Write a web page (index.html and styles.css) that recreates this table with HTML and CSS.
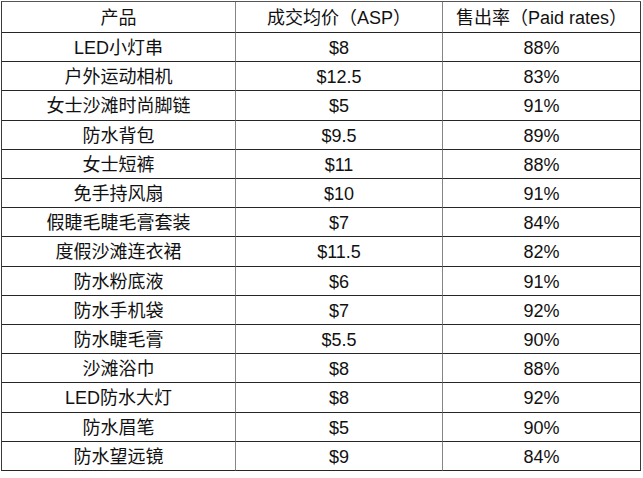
FILE: index.html
```html
<!DOCTYPE html>
<html lang="zh">
<head>
<meta charset="utf-8">
<link rel="stylesheet" href="styles.css">
</head>
<body>
<div class="table">
  <div class="cell c1">产品</div><div class="cell c2">成交均价（ASP）</div><div class="cell c3">售出率（Paid rates）</div>
  <div class="cell c1">LED小灯串</div><div class="cell c2">$8</div><div class="cell c3">88%</div>
  <div class="cell c1">户外运动相机</div><div class="cell c2">$12.5</div><div class="cell c3">83%</div>
  <div class="cell c1">女士沙滩时尚脚链</div><div class="cell c2">$5</div><div class="cell c3">91%</div>
  <div class="cell c1">防水背包</div><div class="cell c2">$9.5</div><div class="cell c3">89%</div>
  <div class="cell c1">女士短裤</div><div class="cell c2">$11</div><div class="cell c3">88%</div>
  <div class="cell c1">免手持风扇</div><div class="cell c2">$10</div><div class="cell c3">91%</div>
  <div class="cell c1">假睫毛睫毛膏套装</div><div class="cell c2">$7</div><div class="cell c3">84%</div>
  <div class="cell c1">度假沙滩连衣裙</div><div class="cell c2">$11.5</div><div class="cell c3">82%</div>
  <div class="cell c1">防水粉底液</div><div class="cell c2">$6</div><div class="cell c3">91%</div>
  <div class="cell c1">防水手机袋</div><div class="cell c2">$7</div><div class="cell c3">92%</div>
  <div class="cell c1">防水睫毛膏</div><div class="cell c2">$5.5</div><div class="cell c3">90%</div>
  <div class="cell c1">沙滩浴巾</div><div class="cell c2">$8</div><div class="cell c3">88%</div>
  <div class="cell c1">LED防水大灯</div><div class="cell c2">$8</div><div class="cell c3">92%</div>
  <div class="cell c1">防水眉笔</div><div class="cell c2">$5</div><div class="cell c3">90%</div>
  <div class="cell c1">防水望远镜</div><div class="cell c2">$9</div><div class="cell c3">84%</div>
</div>
</body>
</html>
```
FILE: styles.css
```css
html, body {
  margin: 0;
  padding: 0;
  background: #ffffff;
}
body {
  padding: 1px 0 0 1px;
  font-family: "Liberation Sans", Arial, "Noto Sans CJK SC", sans-serif;
  font-size: 18px;
  color: #111111;
}
.table {
  display: grid;
  width: 640px;
  box-sizing: border-box;
  grid-template-columns: 234px 207px 198px;
  grid-template-rows: 31px 29px 29px 30px 29px 29px 29px 29px 30px 29px 29px 29px 29px 30px 29px 29px;
  border-left: 1px solid #3a3a3a;
  border-top: 1px solid #555555;
}
.cell {
  box-sizing: border-box;
  display: flex;
  align-items: center;
  justify-content: center;
  border-bottom: 1px solid #262626;
  white-space: nowrap;
  line-height: 1;
  padding-top: 1px;
}
.c1, .c2 {
  border-right: 1px solid #858585;
}
.c3 {
  border-right: 1px solid #3a3a3a;
}
```
